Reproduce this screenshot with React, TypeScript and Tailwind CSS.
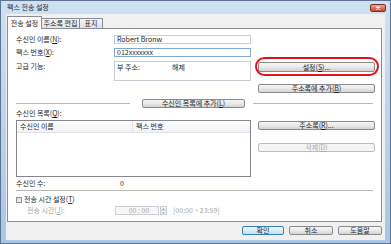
import React from "react";

// Vista-style push button, tiny scale
function Btn({ children, className = "", disabled = false, primary = false }: { children: React.ReactNode; className?: string; disabled?: boolean; primary?: boolean }) {
  const tone = disabled
    ? "border-[#b9bdc1] bg-[#f4f4f4] text-[#a8a8a8]"
    : primary
    ? "border-[#3c7fb1] bg-linear-to-b from-[#eef7fd] to-[#bfe2f6] text-[#1e1e1e]"
    : "border-[#8a8a8a] bg-linear-to-b from-[#f6f6f6] via-[#e9e9e9] to-[#d3d3d3] text-[#1e1e1e]";
  return (
    <div className={`flex items-center justify-center rounded-[2px] border ${tone} ${className}`}>
      <span className="leading-none">{children}</span>
    </div>
  );
}

function Field({ children, focus = false, className = "" }: { children?: React.ReactNode; focus?: boolean; className?: string }) {
  return (
    <div className={`border bg-white ${focus ? "border-[#7fa7cf]" : "border-[#c9ced6]"} ${className}`}>
      {children}
    </div>
  );
}

export default function App() {
  return (
    <div className="w-[391px] h-[244px] flex flex-col border border-[#5d7391] bg-linear-to-b from-[#cfe0f2] to-[#a9c6e7] px-[5px] pb-[3px] font-['Noto_Sans_CJK_KR',sans-serif] text-[7px] leading-none text-[#1e1e1e] overflow-hidden">
      {/* Title bar */}
      <div className="h-[13px] flex items-center justify-between pl-[1px] pr-[-1px]">
        <span className="text-[#1f2a3a]">팩스 전송 설정</span>
        <div className="w-[16px] h-[8px] mr-[-1px] rounded-[2px] border border-[#7a3124] bg-linear-to-b from-[#e9a597] to-[#c4452f] flex items-center justify-center">
          <svg width="6" height="4" viewBox="0 0 6 4">
            <path d="M1 0.5 L5 3.5 M5 0.5 L1 3.5" stroke="#fff" strokeWidth="1.1" />
          </svg>
        </div>
      </div>

      {/* Client area */}
      <div className="flex-1 flex flex-col bg-[#f0f0f0]">
        {/* Tabs */}
        <div className="flex items-end h-[15px] pt-[2px] ml-[1px] -mb-px relative z-10">
          <div className="h-[13px] w-[35px] flex items-center justify-center border border-b-0 border-[#898c95] bg-white">전송 설정</div>
          <div className="h-[11px] w-[38px] flex items-center justify-center border border-l-0 border-[#898c95] bg-linear-to-b from-[#f3f3f3] to-[#e3e3e3]">주소록 편집</div>
          <div className="h-[11px] w-[23px] flex items-center justify-center border border-l-0 border-[#898c95] bg-linear-to-b from-[#f3f3f3] to-[#e3e3e3]">표지</div>
        </div>

        {/* Tab panel */}
        <div className="ml-[1px] w-[375px] border border-[#898c95] bg-white pl-[8px] pt-[6px] pb-[6px] flex flex-col">
          <div className="flex items-center h-[9px]">
            <span className="w-[98px]">수신인 이름(<u>N</u>):</span>
            <Field className="w-[137px] h-[9px] flex items-center pl-[2px]">Robert Bronw</Field>
          </div>
          <div className="flex items-center h-[9px] mt-[4px]">
            <span className="w-[98px]">팩스 번호(<u>X</u>):</span>
            <Field focus className="w-[137px] h-[9px] flex items-center pl-[2px]">012xxxxxxx</Field>
          </div>
          <div className="flex items-start mt-[4px]">
            <span className="w-[98px] mt-[2px]">고급 기능:</span>
            <Field className="w-[137px] h-[20px] flex items-start pt-[2px] pl-[2px]">
              <span className="w-[55px]">부 주소:</span>
              <span>해제</span>
            </Field>
            <div className="relative ml-[7px] mt-[1px]">
              <Btn className="w-[117px] h-[10px]">설정(<u>S</u>)...</Btn>
              <div className="absolute -left-[3px] -right-[4px] -top-[5px] -bottom-[4px] rounded-[10px] border-2 border-[#e3151b]" />
            </div>
          </div>
          <div className="flex mt-[3px] ml-[242px]">
            <Btn className="w-[117px] h-[9px]">주소록에 추가(<u>B</u>)</Btn>
          </div>

          <div className="flex items-center h-[9px] mt-[6px]">
            <div className="w-[114px] h-px bg-[#b8b8b8]" />
            <Btn className="ml-[12px] w-[103px] h-[9px]">수신인 목록에 추가(<u>L</u>)</Btn>
            <div className="ml-[8px] w-[120px] h-px bg-[#b8b8b8]" />
          </div>

          <div className="h-[7px] mt-[2px] flex items-center">수신인 목록(<u>Q</u>):</div>

          <div className="flex mt-[3px]">
            <div className="w-[235px] h-[57px] border border-[#828790] bg-white flex flex-col">
              <div className="h-[12px] flex border-b border-[#e0e3e8] bg-linear-to-b from-white to-[#f1f2f4]">
                <div className="w-[116px] flex items-center pl-[3px] border-r border-[#e0e3e8]">수신인 이름</div>
                <div className="flex items-center pl-[3px]">팩스 번호</div>
              </div>
            </div>
            <div className="ml-[7px] flex flex-col">
              <Btn className="mt-[1px] w-[117px] h-[9px]">주소록(<u>R</u>)...</Btn>
              <Btn disabled className="mt-[13px] w-[117px] h-[9px]">삭제(<u>D</u>)</Btn>
            </div>
          </div>

          <div className="flex items-center h-[7px] mt-[3px]">
            <span className="w-[104px]">수신인 수:</span>
            <span>0</span>
          </div>

          <div className="mt-[3px] w-[357px] h-px bg-[#b8b8b8]" />

          <div className="flex items-center h-[7px] mt-[5px]">
            <div className="w-[6px] h-[6px] border border-[#8e8f8f] bg-linear-to-br from-[#dcdcdc] to-[#f6f6f6]" />
            <span className="ml-[2px]">전송 시간 설정(<u>T</u>)</span>
          </div>

          <div className="flex items-center h-[9px] mt-[3px] text-[#a4a4a4]">
            <span className="w-[99px] pl-[11px]">전송 시간(<u>J</u>):</span>
            <div className="w-[44px] h-[9px] border border-[#c9ced6] bg-[#f7f7f7] flex items-center justify-center pl-[4px]">00 : 00</div>
            <div className="ml-[1px] w-[7px] h-[9px] flex flex-col border border-[#c9ced6] bg-[#f2f2f2]">
              <div className="flex-1 flex items-center justify-center border-b border-[#d6d6d6]">
                <svg width="3" height="2" viewBox="0 0 3 2"><path d="M0 2 L1.5 0 L3 2Z" fill="#b0b0b0" /></svg>
              </div>
              <div className="flex-1 flex items-center justify-center">
                <svg width="3" height="2" viewBox="0 0 3 2"><path d="M0 0 L1.5 2 L3 0Z" fill="#b0b0b0" /></svg>
              </div>
            </div>
            <span className="ml-[6px]">[00:00 ~ 23:59]</span>
          </div>
        </div>

        {/* Dialog buttons */}
        <div className="flex justify-end gap-[5px] mt-[4px] pr-[3px]">
          <Btn primary className="w-[42px] h-[9px]">확인</Btn>
          <Btn className="w-[44px] h-[9px]">취소</Btn>
          <Btn className="w-[44px] h-[9px]">도움말</Btn>
        </div>
      </div>
    </div>
  );
}
